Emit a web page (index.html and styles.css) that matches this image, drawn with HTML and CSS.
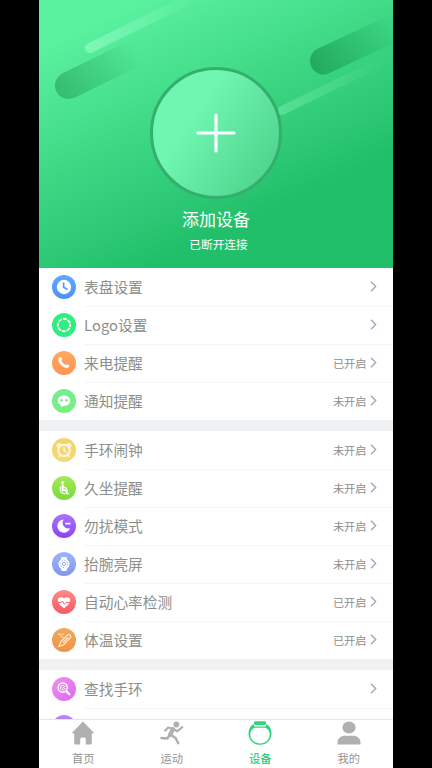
FILE: index.html
```html
<!DOCTYPE html>
<html lang="zh-CN">
<head>
<meta charset="utf-8">
<title>设备</title>
<link rel="stylesheet" href="styles.css">
</head>
<body>
<div class="phone">
  <header class="hero">
    <svg class="streaks" viewBox="39 0 354 268" fill="none" stroke-linecap="round">
      <defs>
        <linearGradient id="d1" gradientUnits="userSpaceOnUse" x1="60" y1="90" x2="137" y2="51"><stop stop-color="#32b66c" stop-opacity=".85"/><stop offset="1" stop-color="#32b66c" stop-opacity="0"/></linearGradient>
        <linearGradient id="l1" gradientUnits="userSpaceOnUse" x1="88" y1="49" x2="195" y2="-4"><stop stop-color="#8cfac0" stop-opacity=".75"/><stop offset="1" stop-color="#8cfac0" stop-opacity="0"/></linearGradient>
        <linearGradient id="d2" gradientUnits="userSpaceOnUse" x1="314" y1="65" x2="396" y2="26"><stop stop-color="#20a75d" stop-opacity=".9"/><stop offset="1" stop-color="#20a75d" stop-opacity="0"/></linearGradient>
        <linearGradient id="l2" gradientUnits="userSpaceOnUse" x1="280" y1="112" x2="384" y2="61"><stop stop-color="#70eaa9" stop-opacity=".55"/><stop offset="1" stop-color="#70eaa9" stop-opacity="0"/></linearGradient>
      </defs>
      <path d="M68.500 85.500L150 46" stroke="url(#d1)" stroke-width="27"/>
      <path d="M90 48L200 -6" stroke="url(#l1)" stroke-width="10"/>
      <path d="M323.500 61L410 20.500" stroke="url(#d2)" stroke-width="27"/>
      <path d="M282 110.500L390 58" stroke="url(#l2)" stroke-width="9"/>
    </svg>
    <div class="add">
      <svg width="40" height="40" viewBox="0 0 40 40" stroke="#fff" stroke-width="3.200" stroke-linecap="round"><path d="M20 2V38M2 20H38"/></svg>
    </div>
    <h1 class="title">添加设备</h1>
    <p class="subtitle">已断开连接</p>
  </header>

  <main class="list">
    <section class="group">
      <div class="row">
        <span class="icon blue"><svg viewBox="0 0 24 24"><circle cx="12" cy="12" r="7.200" fill="#fff"/><path d="M11.600 7.500V12.300L15.500 14.600" fill="none" stroke="#559bfa" stroke-width="1.700"/></svg></span>
        <div class="body"><span class="label">表盘设置</span><svg class="chev" viewBox="0 0 7 11"><path d="M1 .8L5.700 5.500L1 10.200"/></svg></div>
      </div>
      <div class="row">
        <span class="icon green"><svg viewBox="0 0 24 24"><circle cx="12" cy="12" r="6.200" fill="none" stroke="#fff" stroke-width="1.900" stroke-dasharray="3.870 1" stroke-dashoffset="1.900"/></svg></span>
        <div class="body"><span class="label logo">Logo设置</span><svg class="chev" viewBox="0 0 7 11"><path d="M1 .8L5.700 5.500L1 10.200"/></svg></div>
      </div>
      <div class="row">
        <span class="icon orange"><svg viewBox="0 0 24 24"><path d="M7.200 6.800C8.400 5.700 9 6 9.700 7.100C10.500 8.400 10.300 8.900 9.500 9.700C10.200 11.500 11.800 13.100 13.900 14.100C14.700 13.100 15.200 13.100 16.400 13.900C17.600 14.700 17.700 15.200 16.600 16.300C15.500 17.400 14.100 17.400 12.200 16.300C9.700 14.900 7.800 12.800 6.700 10.400C6 8.700 6.100 7.700 7.200 6.800Z" fill="#fff"/></svg></span>
        <div class="body"><span class="label">来电提醒</span><span class="state">已开启</span><svg class="chev" viewBox="0 0 7 11"><path d="M1 .8L5.700 5.500L1 10.200"/></svg></div>
      </div>
      <div class="row">
        <span class="icon mint"><svg viewBox="0 0 24 24"><path d="M12 6.600C15.500 6.600 18.200 8.700 18.200 11.700C18.200 14.700 15.500 16.700 12 16.700L8.600 18L9 16C7 15.200 5.800 13.700 5.800 11.700C5.800 8.700 8.500 6.600 12 6.600Z" fill="#fff"/><circle cx="9.600" cy="11.300" r="1.200" fill="#76e38b"/><circle cx="14.400" cy="11.300" r="1.200" fill="#76e38b"/></svg></span>
        <div class="body"><span class="label">通知提醒</span><span class="state">未开启</span><svg class="chev" viewBox="0 0 7 11"><path d="M1 .8L5.700 5.500L1 10.200"/></svg></div>
      </div>
    </section>

    <section class="group">
      <div class="row">
        <span class="icon yellow"><svg viewBox="0 0 24 24" fill="none" stroke="#fff8e4" stroke-linecap="round"><circle cx="12" cy="12.500" r="5.700" stroke-width="1.900"/><path d="M12 9.500V12.700L14.500 14M8 17L7 18.500M16 17L17 18.500" stroke-width="1.400"/><path d="M5.600 8.500C5.200 6.800 6.700 5.600 8.300 6.100M18.400 8.500C18.800 6.800 17.300 5.600 15.700 6.100" stroke-width="1.900"/></svg></span>
        <div class="body"><span class="label">手环闹钟</span><span class="state">未开启</span><svg class="chev" viewBox="0 0 7 11"><path d="M1 .8L5.700 5.500L1 10.200"/></svg></div>
      </div>
      <div class="row">
        <span class="icon lime"><svg viewBox="0 0 24 24" fill="none" stroke="#fff" stroke-linecap="round" stroke-linejoin="round"><circle cx="10.700" cy="6.600" r="1.500" fill="#fff" stroke="none"/><path d="M10.600 9.300V14.200H14.600V17.500H16" stroke-width="2"/><path d="M11 10.700L14.600 12.400M8.400 11C7.600 14.500 8.700 17.400 12.600 17.700" stroke-width="1.200"/></svg></span>
        <div class="body"><span class="label">久坐提醒</span><span class="state">未开启</span><svg class="chev" viewBox="0 0 7 11"><path d="M1 .8L5.700 5.500L1 10.200"/></svg></div>
      </div>
      <div class="row">
        <span class="icon purple"><svg viewBox="0 0 24 24"><path d="M11.700 5.500A6.600 6.600 0 1 0 18.200 14.200A5.700 5.700 0 0 1 11.700 5.500Z" fill="#fff"/><path d="M14 9.600H17.800" stroke="#fff" stroke-width="1.700" stroke-linecap="round"/></svg></span>
        <div class="body"><span class="label">勿扰模式</span><span class="state">未开启</span><svg class="chev" viewBox="0 0 7 11"><path d="M1 .8L5.700 5.500L1 10.200"/></svg></div>
      </div>
      <div class="row">
        <span class="icon peri"><svg viewBox="0 0 24 24"><path d="M9.600 5H14.400L15.200 7.400A5.700 5.700 0 0 1 15.200 16.600L14.400 19H9.600L8.800 16.600A5.700 5.700 0 0 1 8.800 7.400Z" fill="#fff"/><g fill="none" stroke="#8fa3f3"><circle cx="12" cy="12" r="1.600" stroke-width=".9"/><circle cx="12" cy="12" r="3.500" stroke-width="1.100" stroke-dasharray=".9 1.849"/></g></svg></span>
        <div class="body"><span class="label">抬腕亮屏</span><span class="state">未开启</span><svg class="chev" viewBox="0 0 7 11"><path d="M1 .8L5.700 5.500L1 10.200"/></svg></div>
      </div>
      <div class="row">
        <span class="icon red"><svg viewBox="0 0 24 24"><path d="M12 18.200C8.500 15.700 5.800 13.300 5.800 10.300C5.800 7.200 9.700 5.900 12 8.600C14.300 5.900 18.200 7.200 18.200 10.300C18.200 13.300 15.500 15.700 12 18.200Z" fill="#fff"/><path d="M5.500 12.600H9L10.500 11L12.300 14.300L14 12.400H18.500" fill="none" stroke="#fa6470" stroke-width="1"/></svg></span>
        <div class="body"><span class="label">自动心率检测</span><span class="state">已开启</span><svg class="chev" viewBox="0 0 7 11"><path d="M1 .8L5.700 5.500L1 10.200"/></svg></div>
      </div>
      <div class="row">
        <span class="icon amber"><svg viewBox="0 0 24 24" fill="none" stroke="#fff4df" stroke-width="1.100" stroke-linecap="round"><path d="M8.500 14.200L15.500 7.200A1.900 1.900 0 0 1 18.200 9.900L11.300 16.900L8 18L7.500 17.400ZM11.300 14.200L15.900 9.600M7.800 17.600L6.600 18.700"/><circle cx="7" cy="6.200" r=".6" stroke-width=".7"/><path d="M11.400 6.300C9.700 5.300 8.600 6.500 8.900 8C9.100 9.300 10.100 9.900 11.200 9.200" stroke-width=".9"/></svg></span>
        <div class="body"><span class="label">体温设置</span><span class="state">已开启</span><svg class="chev" viewBox="0 0 7 11"><path d="M1 .8L5.700 5.500L1 10.200"/></svg></div>
      </div>
    </section>

    <section class="group">
      <div class="row">
        <span class="icon pink"><svg viewBox="0 0 24 24" fill="none" stroke="#fff" stroke-linecap="round"><circle cx="10.700" cy="10.600" r="4.600" stroke-width="1.400"/><path d="M12.700 9.300A2.400 2.400 0 1 0 13 11.400M9.800 10.500L10.700 11.400L12.800 9.300" stroke-width="1"/><path d="M14.500 14.400L17.400 17.300" stroke-width="2.300"/></svg></span>
        <div class="body"><span class="label">查找手环</span><svg class="chev" viewBox="0 0 7 11"><path d="M1 .8L5.700 5.500L1 10.200"/></svg></div>
      </div>
      <div class="row">
        <span class="icon violet"></span>
        <div class="body"></div>
      </div>
    </section>
  </main>

  <nav class="tabs">
    <a class="tab"><svg viewBox="0 0 24 24"><path d="M12 .6L23.400 12.200H20.800V22.300Q20.800 23.500 19.600 23.500H14.800V18.300Q14.800 16.600 13.200 16.600H10.800Q9.200 16.600 9.200 18.300V23.500H4.400Q3.200 23.500 3.200 22.300V12.200H.6Z" fill="currentColor"/></svg><span>首页</span></a>
    <a class="tab"><svg viewBox="0 0 24 24" fill="none" stroke="currentColor" stroke-linecap="round" stroke-linejoin="round"><circle cx="16.400" cy="3.500" r="2.900" fill="currentColor" stroke="none"/><path d="M12.900 8.300L10.200 13.600" stroke-width="4.400"/><path d="M5.300 9.600L8.200 6.500L13 7.700L17.100 10.300L22.300 6.200" stroke-width="2.200"/><path d="M9.500 14L7.300 17.600L1.500 17.100M11.200 14L15.800 17.200L18.200 22.200" stroke-width="2.500"/></svg><span>运动</span></a>
    <a class="tab active"><svg viewBox="0 0 24 24"><rect x="6" y=".2" width="12" height="3.900" rx="1.300" fill="currentColor"/><path d="M5.200 3.100L6.500 5.400H17.500L18.800 3.100C21.800 5.200 23.500 8.600 23.500 12.400C23.500 18.800 18.600 23.700 12 23.700C5.400 23.700 .5 18.800 .5 12.400C.5 8.600 2.200 5.200 5.200 3.100Z" fill="currentColor"/><path d="M6.500 6.700H17.500C20.200 8.200 21.700 10.600 21.700 13.500C21.700 18.700 17.400 22.400 12 22.400C6.600 22.400 2.300 18.700 2.300 13.500C2.300 10.600 3.800 8.200 6.500 6.700Z" fill="#fff"/></svg><span>设备</span></a>
    <a class="tab"><svg viewBox="0 0 24 24" fill="currentColor"><ellipse cx="12" cy="6.500" rx="6.600" ry="6.100"/><path d="M.5 23.500V21.500C.5 17 4 14.700 8 14.700H16C20 14.700 23.500 17 23.500 21.500V23.500Z"/></svg><span>我的</span></a>
  </nav>
</div>
</body>
</html>
```
FILE: styles.css
```css
* { box-sizing: border-box; }

body {
  margin: 0;
  background: #000;
  font-family: "Noto Sans CJK SC", sans-serif;
}

.phone {
  width: 354px;
  height: 768px;
  margin-left: 39px;
  display: flex;
  flex-direction: column;
  overflow: hidden;
  background: #fff;
}

.hero {
  position: relative;
  flex: none;
  height: 268px;
  padding-top: 67px;
  display: flex;
  flex-direction: column;
  align-items: center;
  color: #fff;
  background: linear-gradient(155deg, #5af19f 11%, #22bf6b 73%);
}

.streaks {
  position: absolute;
  inset: 0;
  width: 354px;
  height: 268px;
}

.add {
  position: relative;
  width: 132px;
  height: 132px;
  display: flex;
  align-items: center;
  justify-content: center;
  border: 3.5px solid #34af6d;
  border-radius: 50%;
  background: linear-gradient(124deg, #6ff6b1 34%, #50d58e 86%) border-box;
}

.title {
  margin: 8px 0 0;
  font-size: 17px;
  line-height: 24px;
  font-weight: 400;
}

.subtitle {
  margin: 5px 0 0 5px;
  font-size: 11.7px;
  line-height: 16px;
}

.list {
  flex: 1;
  min-height: 0;
  overflow: hidden;
  display: flex;
  flex-direction: column;
  gap: 11px;
  background: #f0f1f3;
}

.group {
  flex: none;
  background: #fff;
}

.row {
  height: 38px;
  padding-left: 13px;
  display: flex;
  align-items: center;
  gap: 8px;
}

.group:nth-child(2) .row { height: 38.06px; }

.icon {
  flex: none;
  width: 24px;
  height: 24px;
  border-radius: 50%;
}

.icon svg { display: block; width: 24px; height: 24px; }

.blue { background: linear-gradient(#5fa8fc, #4d91f9); }
.green { background: #30ed80; }
.orange { background: linear-gradient(#ffaa60, #ff9253); }
.mint { background: linear-gradient(#75ed92, #7bee82); }
.yellow { background: linear-gradient(#f3d265, #f5da7c); }
.lime { background: linear-gradient(#a4ea5a, #7ad93c); }
.purple { background: linear-gradient(#ac74fa, #8b42f4); }
.peri { background: linear-gradient(#9cb5fb, #8296ef); }
.red { background: linear-gradient(#ff8b83, #fb5868); }
.amber { background: linear-gradient(#f1aa5e, #f29144); }
.pink { background: linear-gradient(135deg, #ee91f4, #db69ee); }
.violet { background: linear-gradient(#b489f7, #925fee); }

.body {
  flex: 1;
  height: 100%;
  padding: 0 16px 1px 0;
  display: flex;
  align-items: center;
  box-shadow: 0 1px #f6f6f7;
}

.row:last-child .body { box-shadow: none; }

.label {
  margin-right: auto;
  font-size: 14.7px;
  line-height: 20px;
  color: #8b8f8c;
}

.logo { letter-spacing: .1px; }

.state {
  margin-right: 3.5px;
  font-size: 11.2px;
  line-height: 16px;
  color: #8e8e8e;
}

.chev {
  width: 7px;
  height: 11px;
  fill: none;
  stroke: #9aa5be;
  stroke-width: 1.3;
}

.tabs {
  flex: none;
  height: 49px;
  display: flex;
  border-top: 1px solid #e6e6e8;
  background: #fff;
}

.tab {
  flex: 1;
  display: flex;
  flex-direction: column;
  align-items: center;
  font-size: 11.3px;
  line-height: 16px;
  color: #949494;
}

.tab svg { width: 24px; height: 24px; margin: .5px 0 5.8px; color: #b0b0b0; }

.active { color: #2fd07a; font-weight: 500; }
.active svg { color: #35d27e; }
```
